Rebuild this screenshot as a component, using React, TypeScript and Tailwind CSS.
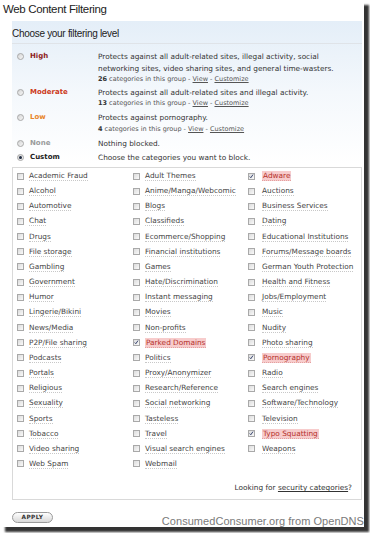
import React from "react";

const cats: [string, boolean][][] = [
  [["Academic Fraud", false], ["Adult Themes", false], ["Adware", true]],
  [["Alcohol", false], ["Anime/Manga/Webcomic", false], ["Auctions", false]],
  [["Automotive", false], ["Blogs", false], ["Business Services", false]],
  [["Chat", false], ["Classifieds", false], ["Dating", false]],
  [["Drugs", false], ["Ecommerce/Shopping", false], ["Educational Institutions", false]],
  [["File storage", false], ["Financial institutions", false], ["Forums/Message boards", false]],
  [["Gambling", false], ["Games", false], ["German Youth Protection", false]],
  [["Government", false], ["Hate/Discrimination", false], ["Health and Fitness", false]],
  [["Humor", false], ["Instant messaging", false], ["Jobs/Employment", false]],
  [["Lingerie/Bikini", false], ["Movies", false], ["Music", false]],
  [["News/Media", false], ["Non-profits", false], ["Nudity", false]],
  [["P2P/File sharing", false], ["Parked Domains", true], ["Photo sharing", false]],
  [["Podcasts", false], ["Politics", false], ["Pornography", true]],
  [["Portals", false], ["Proxy/Anonymizer", false], ["Radio", false]],
  [["Religious", false], ["Research/Reference", false], ["Search engines", false]],
  [["Sexuality", false], ["Social networking", false], ["Software/Technology", false]],
  [["Sports", false], ["Tasteless", false], ["Television", false]],
  [["Tobacco", false], ["Travel", false], ["Typo Squatting", true]],
  [["Video sharing", false], ["Visual search engines", false], ["Weapons", false]],
  [["Web Spam", false], ["Webmail", false], ["", false]],
];

function Check({ on }: { on: boolean }) {
  return (
    <span className="relative inline-block w-[7px] h-[7px] border border-[#a9a9a9] bg-gradient-to-br from-[#dcdcdc] to-[#fafafa] shrink-0">
      {on && (
        <svg viewBox="0 0 7 7" className="absolute left-0 top-0 w-[5px] h-[5px]">
          <path d="M1 3.5 L2.6 5.2 L5.6 0.8" stroke="#1c2a5a" strokeWidth="1.2" fill="none" />
        </svg>
      )}
    </span>
  );
}

function Radio({ on }: { on: boolean }) {
  return (
    <span className="relative inline-flex items-center justify-center w-[7px] h-[7px] rounded-full border border-[#a8a8a8] bg-gradient-to-br from-[#d6d6d6] to-[#f6f6f6] shrink-0">
      {on && <span className="w-[3px] h-[3px] rounded-full bg-[#1e2a40]" />}
    </span>
  );
}

function Level({
  name,
  color,
  lines,
  count,
  on,
  mt,
}: {
  name: string;
  color: string;
  lines: string[];
  count?: string;
  on?: boolean;
  mt: string;
}) {
  return (
    <div className={`flex ${mt}`}>
      <div className="w-[86px] flex items-start shrink-0 h-[11.3px]">
        <div className="flex items-center h-[11.3px] pl-[5px]">
          <Radio on={!!on} />
        </div>
        <div className={`ml-[6px] font-bold text-[7px] leading-[11.3px] ${color}`}>{name}</div>
      </div>
      <div className="text-[#333]">
        {lines.map((l, i) => (
          <div key={i} className="text-[7.35px] leading-[11.3px] whitespace-nowrap">
            {l}
          </div>
        ))}
        {count && (
          <div className="text-[6.5px] leading-[11px] text-[#555] whitespace-nowrap">
            <span className="font-bold text-[#333]">{count}</span> categories in this group -{" "}
            <span className="underline">View</span> - <span className="underline">Customize</span>
          </div>
        )}
      </div>
    </div>
  );
}

export default function App() {
  return (
    <div className="w-[370px] h-[533px] bg-white">
      <div className="relative w-[364px] h-[527px] bg-white shadow-[5px_5px_2px_rgba(0,0,0,0.8)] font-['DejaVu_Sans',Verdana,sans-serif]">
        <div className="h-[21px] pl-[3px] pt-[2px] leading-[14px] text-[11.5px] tracking-[-0.35px] text-[#222] font-['Liberation_Sans',Arial,sans-serif]">
          Web Content Filtering
        </div>
        <div className="ml-[12px] w-[350px]">
          <div className="bg-gradient-to-b from-[#e4eef8] via-[#f4f8fc] to-white">
            <div className="h-[23px] pt-[5px] border-b border-[#dfe3e8] text-[10px] leading-[15px] tracking-[-0.3px] text-[#222] font-['Liberation_Sans',Arial,sans-serif]">
              Choose your filtering level
            </div>
            <div className="pt-[7.35px]">
              <Level
                name="High"
                color="text-[#8e1b1b]"
                mt="mt-0"
                lines={[
                  "Protects against all adult-related sites, illegal activity, social",
                  "networking sites, video sharing sites, and general time-wasters.",
                ]}
                count="26"
              />
              <Level
                name="Moderate"
                color="text-[#cc3a1a]"
                mt="mt-[1.9px]"
                lines={["Protects against all adult-related sites and illegal activity."]}
                count="13"
              />
              <Level
                name="Low"
                color="text-[#e8862a]"
                mt="mt-[3.2px]"
                lines={["Protects against pornography."]}
                count="4"
              />
              <Level name="None" color="text-[#9a9a9a]" mt="mt-[3.7px]" lines={["Nothing blocked."]} />
              <Level
                name="Custom"
                color="text-[#222]"
                mt="mt-[2.7px]"
                on
                lines={["Choose the categories you want to block."]}
              />
            </div>
          </div>
          <div className="mt-[3.35px] h-[333px] border border-[#d9d9d9] bg-white flex flex-col">
            <div className="pt-[0.5px] pl-[4px]">
              {cats.map((row, ri) => (
                <div key={ri} className="grid grid-cols-[116px_115px_1fr] h-[15.17px]">
                  {row.map(([label, on], ci) =>
                    label ? (
                      <div key={ci} className="flex items-center">
                        <Check on={on} />
                        <span
                          className={`ml-[5px] text-[7.35px] leading-[9px] whitespace-nowrap border-b border-dotted ${
                            on
                              ? "bg-[#f7cccc] text-[#b5302a] border-[#e3a0a0] px-[1px] -ml-[0px]"
                              : "text-[#444] border-[#c8c8c8]"
                          } ${ci === 2 ? "ml-[7px]" : ""}`}
                        >
                          {label}
                        </span>
                      </div>
                    ) : (
                      <div key={ci} />
                    )
                  )}
                </div>
              ))}
            </div>
            <div className="mt-[10.5px] pr-[9px] text-right text-[7.35px] leading-[11px] text-[#333]">
              Looking for <span className="underline">security categories</span>?
            </div>
          </div>
          <div className="mt-[12px] ml-[0px] w-[41px] h-[11px] rounded-full border border-[#9a9a9a] bg-gradient-to-b from-white to-[#d8d8d8] flex items-center justify-center text-[5.8px] font-bold tracking-[0.4px] text-[#333]">
            APPLY
          </div>
        </div>
        <div className="absolute right-[0px] bottom-[0px] text-[11px] leading-[12px] text-[#7a7a7a] font-['Liberation_Sans',Arial,sans-serif] tracking-[0.05px] whitespace-nowrap">
          ConsumedConsumer.org from OpenDNS
        </div>
      </div>
    </div>
  );
}
